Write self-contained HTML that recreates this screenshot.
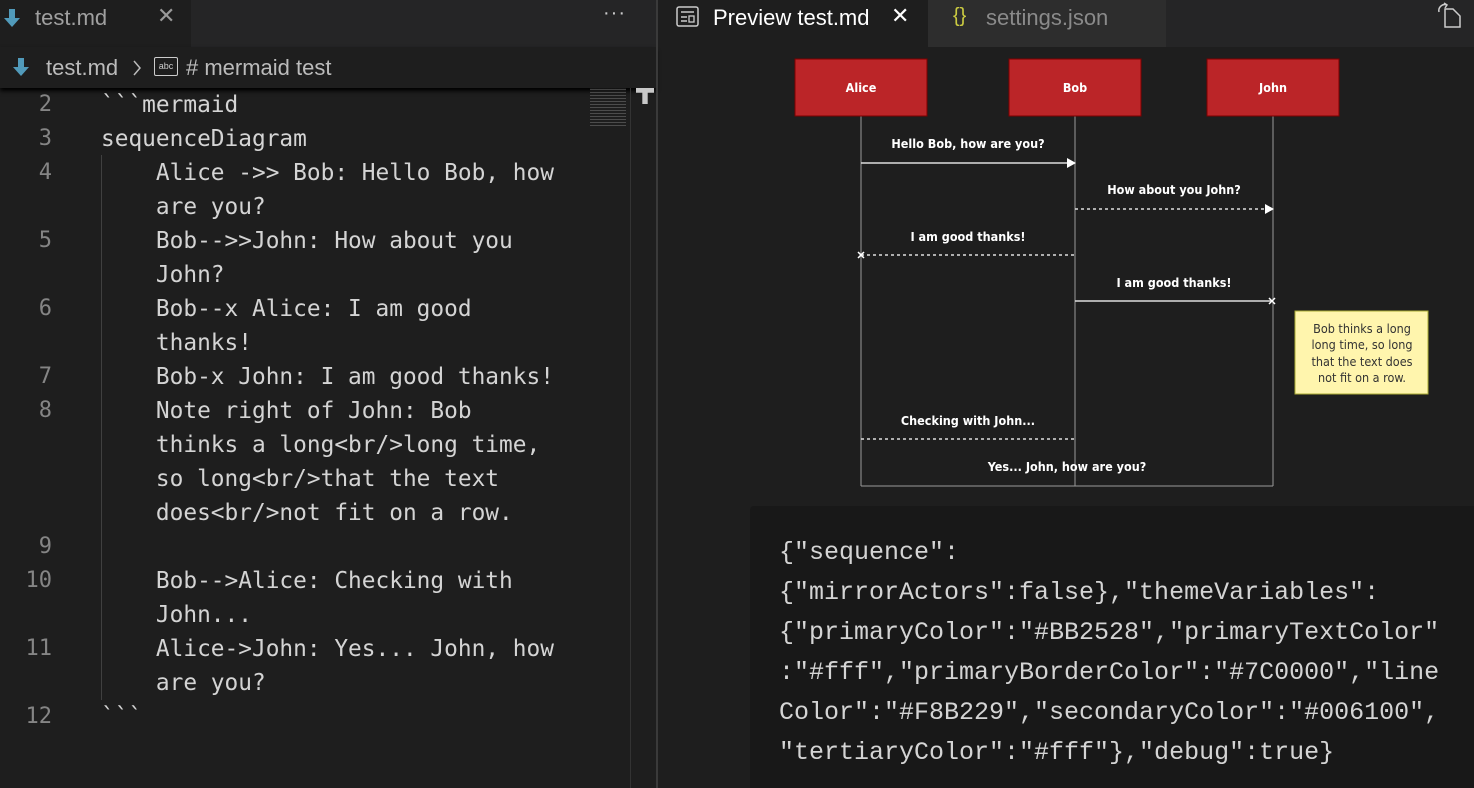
<!DOCTYPE html>
<html><head><meta charset="utf-8"><style>
*{margin:0;padding:0;box-sizing:border-box}
html,body{overflow:hidden}
body{width:1474px;height:788px;background:#1e1e1e;position:relative;overflow:hidden;font-family:"Liberation Sans",sans-serif;color:#ccc}
.a{position:absolute}
.code{font-family:"DejaVu Sans Mono","Liberation Mono",monospace;font-size:22.8px;color:#d4d4d4;white-space:pre;line-height:34px}
.ln{font-family:"DejaVu Sans Mono","Liberation Mono",monospace;font-size:22px;color:#858585;width:52px;text-align:right;line-height:34px}
.json{font-family:"Liberation Mono",monospace;font-size:25px;color:#d4d4d4;white-space:pre;line-height:40px}
.lbl{font-family:"DejaVu Sans Condensed","DejaVu Sans",sans-serif;font-weight:bold;font-size:12.5px;fill:#fff;text-anchor:middle}
</style></head><body>
<div class="a" style="left:0;top:0;width:656px;height:47px;background:#252526"></div>
<div class="a" style="left:0;top:0;width:191px;height:47px;background:#1e1e1e"></div>
<svg class="a" style="left:4px;top:7px" width="18" height="22"><path d="M5 2h6v9h5l-8 9-8-9h5z" fill="#519aba"/></svg>
<div class="a" style="left:35px;top:5px;font-size:22px;color:#a0a0a0">test.md</div>
<div class="a" style="left:157px;top:3px;font-size:22px;color:#999">✕</div>
<div class="a" style="left:603px;top:2px;font-size:20px;color:#ccc;letter-spacing:1px">···</div>
<div class="a" style="left:0;top:47px;width:656px;height:41px;background:#1e1e1e;box-shadow:0 3px 4px #000"></div>
<svg class="a" style="left:13px;top:56px" width="18" height="22"><path d="M5 2h6v9h5l-8 9-8-9h5z" fill="#519aba"/></svg>
<div class="a" style="left:46px;top:55px;font-size:22px;color:#bbb">test.md</div>
<svg class="a" style="left:131px;top:58px" width="12" height="20"><path d="M3 3l6 7-6 7" stroke="#bbb" fill="none" stroke-width="1.5"/></svg>
<div class="a" style="left:154px;top:57px;width:24px;height:19px;border:1.5px solid #ccc;border-radius:2px;font-size:9px;color:#ccc;text-align:center;line-height:16px">abc</div>
<div class="a" style="left:186px;top:55px;font-size:22px;color:#bbb"># mermaid test</div>
<div class="a" style="left:101px;top:155px;width:1px;height:545px;background:#404040"></div>
<div class="a" style="left:630px;top:88px;width:1px;height:700px;background:#333"></div>
<div class="a" style="left:636px;top:88px;width:18px;height:16px;background:#c8c8c8;clip-path:polygon(0 0,100% 0,100% 30%,65% 30%,65% 100%,35% 100%,35% 30%,0 30%)"></div>
<div class="a" style="left:590px;top:88px;width:36px;height:40px;background:repeating-linear-gradient(#1e1e1e 0 1px,#6a6a6a 1px 2px,#1e1e1e 2px 3px);opacity:.6"></div>
<div class="a ln" style="left:0;top:88px">2<br>3<br>4<br><br>5<br><br>6<br><br>7<br>8<br><br><br><br>9<br>10<br><br>11<br><br>12</div>
<div class="a code" style="left:101px;top:88px">&#96;&#96;&#96;mermaid<br>sequenceDiagram<br>    Alice -&gt;&gt; Bob: Hello Bob, how<br>    are you?<br>    Bob--&gt;&gt;John: How about you<br>    John?<br>    Bob--x Alice: I am good<br>    thanks!<br>    Bob-x John: I am good thanks!<br>    Note right of John: Bob<br>    thinks a long&lt;br/&gt;long time,<br>    so long&lt;br/&gt;that the text<br>    does&lt;br/&gt;not fit on a row.<br><br>    Bob--&gt;Alice: Checking with<br>    John...<br>    Alice-&gt;John: Yes... John, how<br>    are you?<br>&#96;&#96;&#96;</div>
<div class="a" style="left:656px;top:0;width:2px;height:788px;background:#3a3a3a"></div>
<div class="a" style="left:658px;top:0;width:816px;height:47px;background:#252526"></div>
<div class="a" style="left:658px;top:0;width:270px;height:47px;background:#1e1e1e"></div>
<div class="a" style="left:928px;top:0;width:238px;height:47px;background:#2d2d2d"></div>
<svg class="a" style="left:676px;top:6px" width="24" height="22"><rect x="1" y="1" width="21" height="19" rx="2" fill="none" stroke="#ccc" stroke-width="1.5"/><path d="M5 6h13M5 11h6M5 15h6" stroke="#ccc" stroke-width="1.5"/><rect x="13" y="10" width="5" height="6" fill="none" stroke="#ccc" stroke-width="1.3"/></svg>
<div class="a" style="left:713px;top:5px;font-size:22px;color:#fff">Preview test.md</div>
<div class="a" style="left:891px;top:3px;font-size:22px;color:#fff">✕</div>
<div class="a" style="left:953px;top:5px;font-size:20px;color:#cbcb41">{}</div>
<div class="a" style="left:986px;top:5px;font-size:22px;color:#8a8a8a">settings.json</div>
<svg class="a" style="left:1436px;top:2px" width="28" height="26"><path d="M9 7h8l7 7v11H9z" fill="none" stroke="#ccc" stroke-width="1.5"/><path d="M3 10a6 6 0 0 1 8-7M8 1l3 2-2 3" fill="none" stroke="#ccc" stroke-width="1.5"/></svg>
<svg class="a" style="left:0;top:0" width="1474" height="500">
<g stroke="#999" stroke-width="1"><line x1="861" y1="116" x2="861" y2="486"/><line x1="1075" y1="116" x2="1075" y2="486"/><line x1="1273" y1="116" x2="1273" y2="486"/><line x1="861" y1="486" x2="1273" y2="486"/></g>
<g fill="#bb2528" stroke="#7c0000"><rect x="795" y="59" width="132" height="57"/><rect x="1009" y="59" width="132" height="57"/><rect x="1207" y="59" width="132" height="57"/></g>
<text class="lbl" x="861" y="92">Alice</text><text class="lbl" x="1075" y="92">Bob</text><text class="lbl" x="1273" y="92">John</text>
<g stroke="#ddd" stroke-width="1.5" fill="none">
<line x1="861" y1="163" x2="1068" y2="163"/>
<line x1="1075" y1="209" x2="1266" y2="209" stroke-dasharray="3,3"/>
<line x1="861" y1="255" x2="1075" y2="255" stroke-dasharray="3,3"/>
<line x1="1075" y1="301" x2="1272" y2="301"/>
<line x1="861" y1="439" x2="1075" y2="439" stroke-dasharray="3,3"/>
<path d="M858 252l6 6M864 252l-6 6M1269 298l6 6M1275 298l-6 6" stroke="#fff"/>
</g>
<path d="M1067 158l9 5-9 5zM1265 204l9 5-9 5z" fill="#fff"/>
<text class="lbl" x="968" y="148">Hello Bob, how are you?</text>
<text class="lbl" x="1174" y="194">How about you John?</text>
<text class="lbl" x="968" y="241">I am good thanks!</text>
<text class="lbl" x="1174" y="287">I am good thanks!</text>
<text class="lbl" x="968" y="425">Checking with John...</text>
<text class="lbl" x="1067" y="471">Yes... John, how are you?</text>
<rect x="1295" y="311" width="133" height="83" fill="#fff5ad" stroke="#aaaa33"/>
<g style="font-family:'DejaVu Sans Condensed','DejaVu Sans',sans-serif;font-size:12.5px;fill:#333;text-anchor:middle">
<text x="1362" y="333">Bob thinks a long</text><text x="1362" y="349">long time, so long</text><text x="1362" y="366">that the text does</text><text x="1362" y="382">not fit on a row.</text></g>
</svg>
<div class="a" style="left:750px;top:506px;width:724px;height:282px;background:#181818;border-radius:4px 0 0 0"></div>
<div class="a json" style="left:779px;top:533px">{"sequence":<br>{"mirrorActors":false},"themeVariables":<br>{"primaryColor":"#BB2528","primaryTextColor"<br>:"#fff","primaryBorderColor":"#7C0000","line<br>Color":"#F8B229","secondaryColor":"#006100",<br>"tertiaryColor":"#fff"},"debug":true}</div>
</body></html>
